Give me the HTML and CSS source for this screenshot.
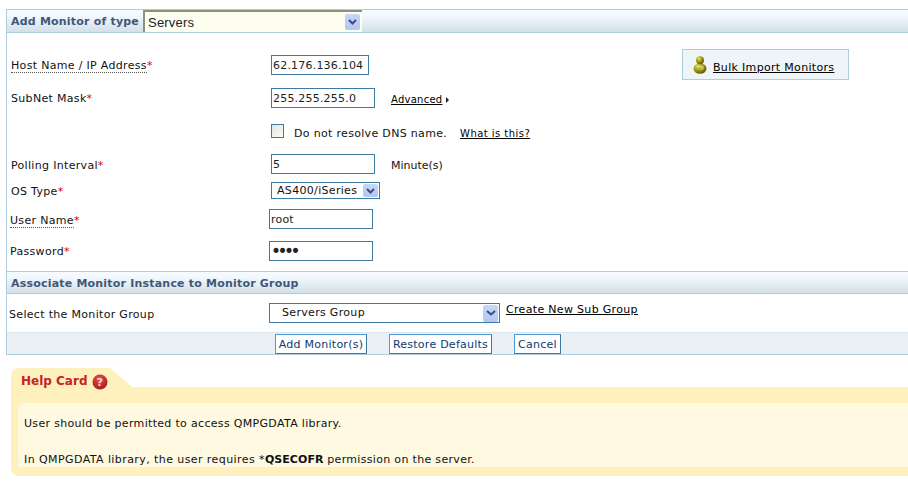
FILE: index.html
```html
<!DOCTYPE html>
<html lang="en">
<head>
<meta charset="utf-8">
<title>Add Monitor</title>
<link rel="stylesheet" href="styles.css">
</head>
<body>
<form class="panel">
  <div class="head head-top">
    <span class="head-title">Add Monitor of type</span>
    <div class="type-select">
      <span>Servers</span>
      <span class="arrow arrow-top"><svg width="9" height="6" viewBox="0 0 9 6"><path d="M1 1l3.5 3.5L8 1" fill="none" stroke="#3d4d78" stroke-width="2"/></svg></span>
    </div>
  </div>
  <div class="body-wrap">
    <div class="fields">
      <div class="row row-33">
        <label class="lab"><span class="dotted">Host Name / IP Address</span><i>*</i></label>
        <input class="inp w-host" value="62.176.136.104">
      </div>
      <div class="row row-33">
        <label class="lab">SubNet Mask<i>*</i></label>
        <input class="inp w-std" value="255.255.255.0">
        <a class="link adv" href="#">Advanced</a><span class="tri"></span>
      </div>
      <div class="row row-33">
        <span class="lab"></span>
        <span class="check"></span>
        <span class="dns">Do not resolve DNS name.</span>
        <a class="link what" href="#">What is this?</a>
      </div>
      <div class="row row-28">
        <label class="lab lab-low">Polling Interval<i>*</i></label>
        <input class="inp w-std" value="5">
        <span class="unit">Minute(s)</span>
      </div>
      <div class="row row-27">
        <label class="lab lab-os">OS Type<i>*</i></label>
        <div class="os-select">
          <span>AS400/iSeries</span>
          <span class="arrow arrow-os"><svg width="9" height="6" viewBox="0 0 9 6"><path d="M1 1l3.5 3.5L8 1" fill="none" stroke="#3d4d78" stroke-width="2"/></svg></span>
        </div>
      </div>
      <div class="row row-32 shift">
        <label class="lab lab-low"><span class="dotted">User Name</span><i>*</i></label>
        <input class="inp w-std" value="root">
      </div>
      <div class="row row-30 shift">
        <label class="lab">Password<i>*</i></label>
        <input class="inp w-std pw" type="password" value="root">
      </div>
    </div>
    <aside class="bulk">
      <svg class="pin" width="14" height="18" viewBox="0 0 14 18">
        <defs>
          <radialGradient id="g" cx="35%" cy="30%" r="75%">
            <stop offset="0" stop-color="#e6e27a"/>
            <stop offset=".5" stop-color="#a39a14"/>
            <stop offset="1" stop-color="#5c5406"/>
          </radialGradient>
        </defs>
        <ellipse cx="7" cy="12.5" rx="6.5" ry="5.2" fill="url(#g)"/>
        <path d="M5 10.5h5v2.5H7.500" fill="none" stroke="#e0dc80" stroke-width="1"/>
        <circle cx="7" cy="4.200" r="4" fill="url(#g)"/>
      </svg>
      <a class="link bulk-link" href="#">Bulk Import Monitors</a>
    </aside>
  </div>
  <div class="head head-sec">
    <span class="head-title">Associate Monitor Instance to Monitor Group</span>
  </div>
  <div class="group-row">
    <span class="group-lab">Select the Monitor Group</span>
    <div class="group-select">
      <span class="group-val">Servers Group</span>
      <span class="arrow arrow-group"><svg width="10" height="6" viewBox="0 0 10 6"><path d="M1 1l4 3.500L9 1" fill="none" stroke="#3d4d78" stroke-width="2"/></svg></span>
    </div>
    <a class="link new-group" href="#">Create New Sub Group</a>
  </div>
  <div class="bar">
    <button class="btn b-add" type="button">Add Monitor(s)</button>
    <button class="btn b-restore" type="button">Restore Defaults</button>
    <button class="btn b-cancel" type="button">Cancel</button>
  </div>
</form>
<section class="help">
  <div class="tab">
    <span class="tab-title">Help Card</span>
    <svg width="16" height="16" viewBox="0 0 17 17">
      <defs>
        <radialGradient id="r" cx="45%" cy="30%" r="75%">
          <stop offset="0" stop-color="#e8504f"/>
          <stop offset="1" stop-color="#a81414"/>
        </radialGradient>
      </defs>
      <circle cx="8.500" cy="8.500" r="8" fill="url(#r)"/>
      <text x="8.500" y="12.500" text-anchor="middle" class="q">?</text>
    </svg>
  </div>
  <div class="card">
    <div class="card-in">
      <p class="p1">User should be permitted to access QMPGDATA library.</p>
      <p class="p2">In QMPGDATA library, the user requires *<b>QSECOFR</b><span class="p2-end"> permission on the server.</span></p>
    </div>
  </div>
</section>
</body>
</html>
```
FILE: styles.css
```css
* { box-sizing: border-box; }
html, body { margin: 0; padding: 0; }
body {
  width: 908px;
  height: 495px;
  overflow: hidden;
  padding: 9px 0 0 6px;
  background: #fff;
  font: 11px/13px "DejaVu Sans", Verdana, sans-serif;
  letter-spacing: .32px;
  color: #111;
}
.panel {
  width: 920px;
  border: 1px solid #aecde0;
  border-width: 1px 0 1px 1px;
  height: 346px;
}
.head {
  display: flex;
  align-items: center;
  background: linear-gradient(#f6fbff 0%, #f2f8fd 25%, #d2e0e9 100%);
  border-bottom: 1px solid #aecde0;
}
.head-top { height: 23px; }
.head-sec { height: 23px; border-top: 1px solid #aecde0; }
.head-title {
  padding-left: 4px;
  font-weight: bold;
  color: #3f5878;
  letter-spacing: .2px;
  white-space: nowrap;
}
.head-sec .head-title { padding-top: 2px; }
.type-select {
  margin-left: 4px;
  width: 219px;
  height: 22px;
  background: #fdfdf0;
  border-top: 2px solid #8f8f82;
  border-left: 2px solid #8f8f82;
  display: flex;
  align-items: center;
  justify-content: space-between;
  padding: 0 2px 0 3px;
  font: 13px "Liberation Sans", Arial, sans-serif;
  letter-spacing: .2px;
  color: #222;
}
.arrow {
  display: flex;
  align-items: center;
  justify-content: center;
  background: linear-gradient(#c6d7f8, #b0c6f3);
  border-radius: 2px;
}
.arrow-top { width: 15px; height: 16px; }
.arrow-os { width: 15px; height: 13px; }
.arrow-group { width: 15px; height: 17px; }
.body-wrap {
  display: flex;
  height: 238px;
}
.fields {
  width: 675px;
  padding-top: 22px;
}
.row {
  display: flex;
  align-items: flex-start;
  padding-left: 4px;
}
.row-33 { height: 33px; }
.row-28 { height: 28px; }
.row-27 { height: 27px; }
.row-32 { height: 32px; }
.row-30 { height: 30px; }
.shift { padding-left: 3px; }
.lab {
  width: 260px;
  padding-top: 1px;
  line-height: 20px;
  white-space: nowrap;
  flex: none;
}
.shift .lab { width: 259px; }
.lab-low { padding-top: 2px; }
.lab-os { line-height: 18px; }
.lab i { color: #e00000; font-style: normal; }
.dotted { border-bottom: 1px dotted #555; }
.inp {
  height: 20px;
  border: 1px solid #3f7aa3;
  padding: 0 1px;
  font: 11px "DejaVu Sans", Verdana, sans-serif;
  letter-spacing: .2px;
  color: #222;
  background: #fff;
  border-radius: 0;
  outline: 0;
}
.w-host { width: 98px; }
.w-std { width: 104px; }
.pw { font-size: 17px; letter-spacing: -3.5px; color: #222; padding-bottom: 1px; }
.link { color: #000; text-decoration: underline; white-space: nowrap; }
.adv { margin: 5px 0 0 16px; font-size: 10px; letter-spacing: .25px; }
.tri {
  margin: 9px 0 0 4px;
  border-left: 3px solid #222;
  border-top: 3px solid transparent;
  border-bottom: 3px solid transparent;
}
.check {
  width: 13px;
  height: 14px;
  margin-top: 3px;
  border: 1px solid #3f7aa3;
  background: linear-gradient(135deg, #e4e4de, #fbfbf8);
  flex: none;
}
.dns { margin: 6px 0 0 10px; white-space: nowrap; }
.what { margin: 6px 0 0 13px; font-size: 10px; letter-spacing: .45px; }
.unit { margin: 5px 0 0 16px; letter-spacing: 0; }
.os-select {
  width: 109px;
  height: 17px;
  border: 1px solid #3f7aa3;
  display: flex;
  align-items: center;
  justify-content: space-between;
  padding: 0 1px 0 5px;
}
.bulk {
  width: 167px;
  height: 31px;
  margin-top: 16px;
  border: 1px solid #aecde0;
  background: #eef5f9;
  display: flex;
  align-items: center;
  gap: 6px;
  padding-left: 10px;
}
.pin { flex: none; }
.bulk-link { margin-top: 5px; }
.group-row {
  height: 38px;
  display: flex;
  align-items: flex-start;
  padding-left: 2px;
}
.group-lab { width: 260px; margin-top: 14px; flex: none; white-space: nowrap; }
.group-select {
  width: 231px;
  height: 20px;
  margin-top: 9px;
  border: 1px solid #3f7aa3;
  display: flex;
  align-items: center;
  justify-content: space-between;
  padding: 0 1px 0 12px;
}
.group-val { margin-bottom: 2px; }
.new-group { margin: 9px 0 0 6px; }
.bar {
  height: 22px;
  background: #ebf0f5;
  border-top: 1px solid #dde6ec;
  display: flex;
  align-items: flex-end;
  padding-left: 268px;
}
.btn {
  height: 20px;
  padding: 0;
  background: #fff;
  border: 1px solid #4e9ad6;
  border-right-color: #3f7aa3;
  border-bottom-color: #3f7aa3;
  color: #0c3b70;
  font: 11px "DejaVu Sans", Verdana, sans-serif;
  letter-spacing: .25px;
}
.b-add { width: 92px; }
.b-restore { width: 103px; margin-left: 22px; }
.b-cancel { width: 47px; margin-left: 22px; }
.help {
  margin: 13px 0 0 5px;
  width: 920px;
}
.tab {
  position: relative;
  z-index: 1;
  width: 121px;
  height: 22px;
  margin-bottom: -3px;
  background: #fef1bd;
  border-top-left-radius: 7px;
  clip-path: polygon(0 0, 99px 0, 121px 19px, 121px 22px, 0 22px);
  display: flex;
  align-items: center;
  gap: 5px;
  padding: 5px 0 0 10px;
}
.tab-title { font-weight: bold; font-size: 12px; letter-spacing: 0; color: #c62323; white-space: nowrap; }
.q { font: bold 12px "DejaVu Sans", sans-serif; fill: #f6d8d8; }
.card {
  height: 89px;
  background: #fef1bd;
  border-bottom-left-radius: 7px;
  padding: 16px 0 9px 7px;
}
.card-in {
  height: 64px;
  background: #fef9e0;
  border-top-left-radius: 7px;
  padding: 14px 0 0 6px;
}
.card-in p { margin: 0; white-space: nowrap; }
.p2 { padding-top: 23px; letter-spacing: .42px; }
.p2 b { letter-spacing: .05px; }
.p2-end { letter-spacing: .32px; }
```
